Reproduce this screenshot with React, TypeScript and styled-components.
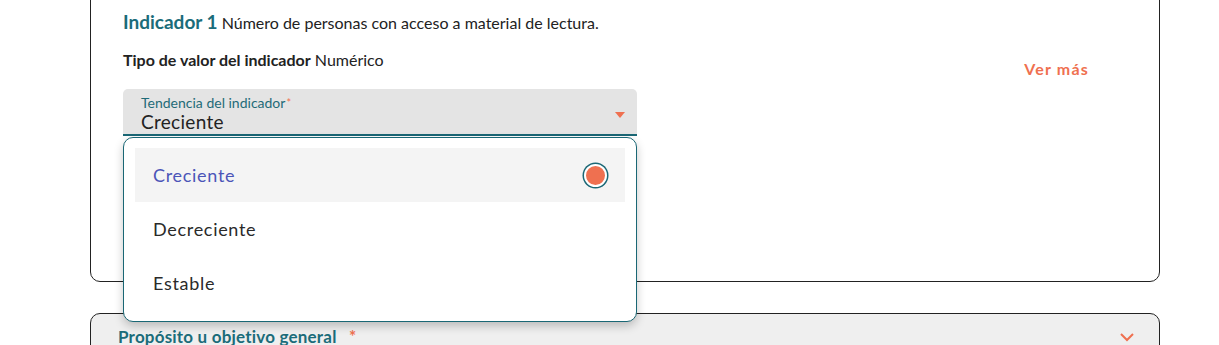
import React from "react";
import styled, { createGlobalStyle } from "styled-components";

const GlobalStyle = createGlobalStyle`
  body {
    margin: 0;
    background: #fff;
    font-family: Lato, "Open Sans", Arial, sans-serif;
    color: #222;
    overflow: hidden;
  }
`;

const options = ["Creciente", "Decreciente", "Estable"];

export default function App() {
  const selected = "Creciente";

  return (
    <>
      <GlobalStyle />
      <Page>
        <IndicatorCard>
          <TitleLine>
            <IndicatorName>Indicador 1</IndicatorName>
            <Description>Número de personas con acceso a material de lectura.</Description>
          </TitleLine>
          <Row>
            <FieldColumn>
              <TypeLine>
                <b>Tipo de valor del indicador</b> Numérico
              </TypeLine>
              <SelectWrap>
                <SelectBox>
                  <SelectLabel>
                    Tendencia del indicador<Required>*</Required>
                  </SelectLabel>
                  <SelectValue>{selected}</SelectValue>
                  <Arrow />
                </SelectBox>
                <Menu>
                  {options.map((opt) => (
                    <MenuItem key={opt} $active={opt === selected}>
                      {opt}
                      {opt === selected && <Radio />}
                    </MenuItem>
                  ))}
                </Menu>
              </SelectWrap>
            </FieldColumn>
            <SeeMore>Ver más</SeeMore>
          </Row>
        </IndicatorCard>

        <SectionCard>
          <SectionTitle>
            Propósito u objetivo general <Star>*</Star>
          </SectionTitle>
          <svg width="16" height="10" viewBox="0 0 16 10">
            <path d="M2 2 L8 8 L14 2" fill="none" stroke="#ef7050" strokeWidth="2" />
          </svg>
        </SectionCard>
      </Page>
    </>
  );
}

const Page = styled.div`
  width: 1070px;
  margin-left: 90px;
  margin-top: -20px;
`;

const IndicatorCard = styled.section`
  border: 1px solid #222;
  border-radius: 10px;
  padding: 29px 32px 145px 32px;
`;

const TitleLine = styled.div`
  line-height: 24px;
`;

const IndicatorName = styled.span`
  font-size: 19px;
  font-weight: 700;
  color: #1b6c7a;
  margin-right: 4px;
`;

const Description = styled.span`
  font-size: 16px;
  color: #222;
`;

const Row = styled.div`
  display: flex;
  justify-content: space-between;
  align-items: flex-start;
  margin-top: 14px;
`;

const FieldColumn = styled.div`
  display: flex;
  flex-direction: column;
  gap: 18px;
  width: 514px;
`;

const TypeLine = styled.div`
  font-size: 16px;
  line-height: 22px;
  b {
    font-weight: 700;
  }
`;

const SelectWrap = styled.div`
  position: relative;
`;

const SelectBox = styled.div`
  position: relative;
  background: #e4e4e4;
  border-radius: 5px 5px 0 0;
  border-bottom: 2px solid #1a6775;
  padding: 6px 18px 0;
  height: 39px;
`;

const SelectLabel = styled.div`
  font-size: 14px;
  line-height: 16px;
  color: #1f6b78;
`;

const Required = styled.span`
  color: #ef7050;
  font-size: 11px;
  vertical-align: top;
  margin-left: 1px;
`;

const SelectValue = styled.div`
  font-size: 19px;
  line-height: 22px;
  letter-spacing: 0.3px;
  color: #222;
`;

const Arrow = styled.span`
  position: absolute;
  right: 12px;
  top: 23px;
  width: 0;
  height: 0;
  border-left: 5px solid transparent;
  border-right: 5px solid transparent;
  border-top: 6px solid #ef7050;
`;

const Menu = styled.ul`
  position: absolute;
  top: calc(100% + 1px);
  left: 0;
  right: 0;
  margin: 0;
  padding: 10px 11px 11px;
  list-style: none;
  background: #fff;
  border: 1px solid #1a6775;
  border-radius: 10px;
  box-shadow: 0 4px 10px rgba(0, 0, 0, 0.22);
  z-index: 10;
`;

const MenuItem = styled.li<{ $active?: boolean }>`
  display: flex;
  align-items: center;
  justify-content: space-between;
  height: 54px;
  padding: 0 18px;
  font-size: 18px;
  letter-spacing: 0.7px;
  color: ${(p) => (p.$active ? "#4b55b8" : "#2a2a2a")};
  background: ${(p) => (p.$active ? "#f4f4f4" : "transparent")};
`;

const Radio = styled.span`
  width: 19px;
  height: 19px;
  border-radius: 50%;
  background: #ef7050;
  border: 2px solid #fff;
  box-shadow: 0 0 0 1.5px #1a6775;
`;

const SeeMore = styled.a`
  margin-top: 9px;
  margin-right: 38px;
  font-size: 16px;
  font-weight: 700;
  letter-spacing: 1.2px;
  color: #ef7050;
  line-height: 22px;
  cursor: pointer;
`;

const SectionCard = styled.section`
  display: flex;
  align-items: center;
  justify-content: space-between;
  margin-top: 31px;
  background: #efefef;
  border: 1px solid #222;
  border-radius: 10px;
  padding: 12px 24px 12px 27px;
`;

const SectionTitle = styled.h3`
  margin: 0;
  font-size: 17px;
  line-height: 22px;
  font-weight: 700;
  color: #1b6c7a;
  letter-spacing: 0.2px;
`;

const Star = styled.span`
  color: #ef7050;
  margin-left: 8px;
`;
